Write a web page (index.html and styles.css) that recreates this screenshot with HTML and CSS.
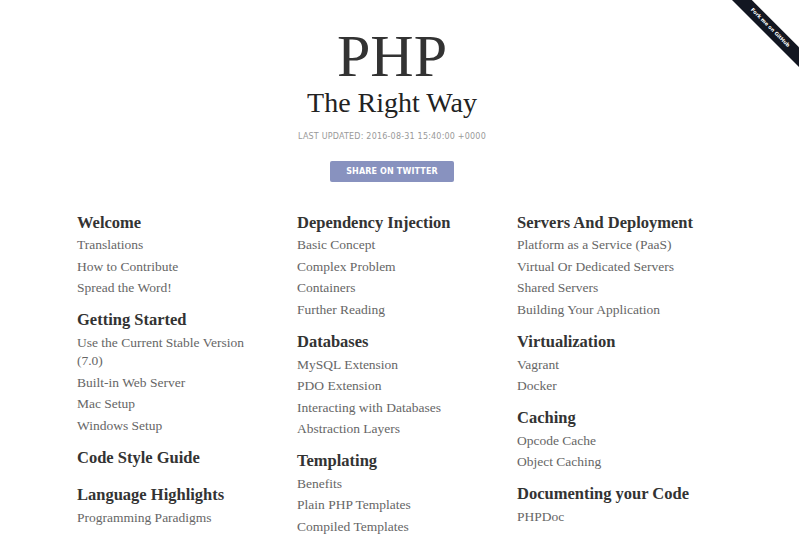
FILE: index.html
```html
<!DOCTYPE html>
<html lang="en">
<head>
<meta charset="utf-8">
<title>PHP: The Right Way</title>
<link rel="stylesheet" href="styles.css">
</head>
<body>
<div class="page">
  <header class="masthead">
    <h1 class="title">PHP</h1>
    <div class="subtitle">The Right Way</div>
    <div class="updated">Last Updated: 2016-08-31 15:40:00 +0000</div>
    <a class="share" href="#">Share on Twitter</a>
  </header>

  <nav class="toc">
    <div class="col">
      <section class="sec">
        <h2>Welcome</h2>
        <ul>
          <li><a href="#">Translations</a></li>
          <li><a href="#">How to Contribute</a></li>
          <li><a href="#">Spread the Word!</a></li>
        </ul>
      </section>
      <section class="sec">
        <h2>Getting Started</h2>
        <ul>
          <li><a href="#">Use the Current Stable Version (7.0)</a></li>
          <li><a href="#">Built-in Web Server</a></li>
          <li><a href="#">Mac Setup</a></li>
          <li><a href="#">Windows Setup</a></li>
        </ul>
      </section>
      <section class="sec sec-empty">
        <h2>Code Style Guide</h2>
      </section>
      <section class="sec">
        <h2>Language Highlights</h2>
        <ul>
          <li><a href="#">Programming Paradigms</a></li>
        </ul>
      </section>
    </div>
    <div class="col">
      <section class="sec">
        <h2>Dependency Injection</h2>
        <ul>
          <li><a href="#">Basic Concept</a></li>
          <li><a href="#">Complex Problem</a></li>
          <li><a href="#">Containers</a></li>
          <li><a href="#">Further Reading</a></li>
        </ul>
      </section>
      <section class="sec">
        <h2>Databases</h2>
        <ul>
          <li><a href="#">MySQL Extension</a></li>
          <li><a href="#">PDO Extension</a></li>
          <li><a href="#">Interacting with Databases</a></li>
          <li><a href="#">Abstraction Layers</a></li>
        </ul>
      </section>
      <section class="sec">
        <h2>Templating</h2>
        <ul>
          <li><a href="#">Benefits</a></li>
          <li><a href="#">Plain PHP Templates</a></li>
          <li><a href="#">Compiled Templates</a></li>
        </ul>
      </section>
    </div>
    <div class="col">
      <section class="sec">
        <h2>Servers And Deployment</h2>
        <ul>
          <li><a href="#">Platform as a Service (PaaS)</a></li>
          <li><a href="#">Virtual Or Dedicated Servers</a></li>
          <li><a href="#">Shared Servers</a></li>
          <li><a href="#">Building Your Application</a></li>
        </ul>
      </section>
      <section class="sec">
        <h2>Virtualization</h2>
        <ul>
          <li><a href="#">Vagrant</a></li>
          <li><a href="#">Docker</a></li>
        </ul>
      </section>
      <section class="sec">
        <h2>Caching</h2>
        <ul>
          <li><a href="#">Opcode Cache</a></li>
          <li><a href="#">Object Caching</a></li>
        </ul>
      </section>
      <section class="sec">
        <h2>Documenting your Code</h2>
        <ul>
          <li><a href="#">PHPDoc</a></li>
        </ul>
      </section>
    </div>
  </nav>
</div>

<div class="ribbon-wrap">
  <a class="ribbon" href="#">Fork me on GitHub</a>
</div>
</body>
</html>
```

FILE: styles.css
```css
html, body {
  margin: 0;
  padding: 0;
  background: #fff;
  overflow: hidden;
}

body {
  font-family: "Liberation Serif", "Times New Roman", serif;
  color: #333;
}

.page {
  width: 784px;
}

.masthead {
  display: flex;
  flex-direction: column;
  align-items: center;
  padding-top: 26px;
}

.title {
  margin: 0;
  font-size: 60px;
  line-height: 60px;
  font-weight: normal;
  color: #333;
}

.subtitle {
  margin-top: 3px;
  font-size: 28px;
  line-height: 28px;
  color: #222;
}

.updated {
  margin-top: 14px;
  font-family: "DejaVu Sans", Verdana, sans-serif;
  font-size: 8px;
  line-height: 12px;
  letter-spacing: 0.2px;
  text-transform: uppercase;
  color: #999;
}

.share {
  margin-top: 18px;
  display: block;
  width: 124px;
  height: 21px;
  box-sizing: border-box;
  background: #8892bf;
  border-radius: 2px;
  color: #fff;
  font-family: "DejaVu Sans", Verdana, sans-serif;
  font-weight: bold;
  font-size: 8px;
  line-height: 21px;
  letter-spacing: 0.15px;
  text-align: center;
  text-transform: uppercase;
  text-decoration: none;
}

.toc {
  display: grid;
  grid-template-columns: 220px 220px 220px;
  padding-left: 77px;
  margin-top: 28.5px;
}

.col {
  padding-right: 30px;
}

.sec h2 {
  margin: 0;
  font-size: 16.5px;
  line-height: 24px;
  font-weight: bold;
  color: #333;
}

.sec ul {
  list-style: none;
  margin: 0 0 9.25px;
  padding: 0;
}

.sec li {
  font-size: 13.5px;
  line-height: 18px;
  padding: 1.75px 0;
}

.sec a {
  color: #666;
  text-decoration: none;
}

.sec-empty {
  margin-bottom: 13.5px;
}

.ribbon-wrap {
  position: absolute;
  top: 0;
  right: 0;
  width: 100px;
  height: 100px;
  overflow: hidden;
}

.ribbon {
  position: absolute;
  left: -4px;
  top: 21px;
  width: 150px;
  height: 13.5px;
  background: #121621;
  transform: rotate(45deg);
  color: #fff;
  font-family: "DejaVu Sans", Verdana, sans-serif;
  font-size: 5px;
  font-weight: bold;
  line-height: 13.5px;
  text-align: center;
  text-decoration: none;
}
```
